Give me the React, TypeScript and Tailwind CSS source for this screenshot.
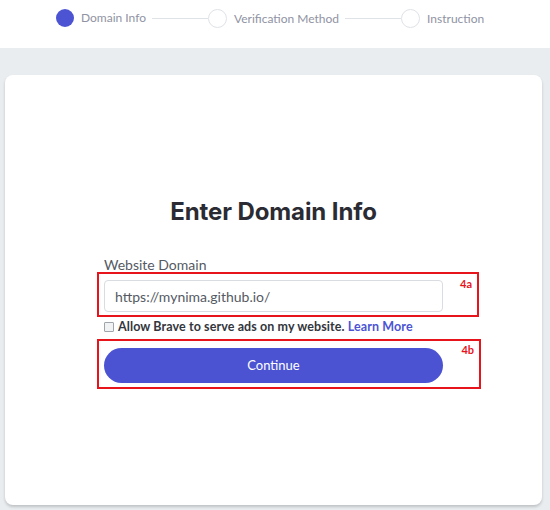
import React from "react";

function Step({ label, active, last }: { label: string; active?: boolean; last?: boolean }) {
  return (
    <div className="flex items-center">
      <span
        className={
          active
            ? "w-[18px] h-[18px] rounded-full bg-[#4c54d4]"
            : "w-[19px] h-[19px] rounded-full border border-[#dfe2e7] bg-white"
        }
      />
      <span className="ml-[7px] text-[12px] text-[#8f93a3]">{label}</span>
      {!last && <span className="ml-[6px] w-[56px] h-px bg-[#dfe2e7]" />}
    </div>
  );
}

export default function App() {
  return (
    <div className="w-[550px] h-[510px] bg-[#e9edf0] font-['Lato',sans-serif] overflow-hidden">
      <div className="h-[48px] bg-white flex items-start pt-[9px] pl-[56px]">
        <Step label="Domain Info" active />
        <Step label="Verification Method" />
        <Step label="Instruction" last />
      </div>

      <div className="mt-[27px] mx-[5px] w-[537px] h-[430px] bg-white rounded-lg shadow-[0_2px_3px_rgba(0,0,0,0.18)] flex flex-col items-center">
        <h1 className="mt-[121px] text-[24px] leading-8 font-bold text-[#2b2b33] font-['Inter',sans-serif] tracking-[-0.1px]">
          Enter Domain Info
        </h1>

        <div className="mt-[27px] w-[339px] flex flex-col">
          <label className="text-[14px] leading-5 text-[#555a63]">Website Domain</label>

          <div className="relative mt-[5px]">
            <input
              type="text"
              defaultValue="https://mynima.github.io/"
              className="w-full h-[32px] border border-[#d9dce1] rounded px-[10px] text-[14px] text-[#555a63] outline-none"
            />
            <div className="absolute left-[-7px] top-[-8px] w-[382px] h-[45px] border-2 border-[#e8141c]">
              <span className="absolute right-[5px] top-[4px] text-[11px] font-bold text-[#e8141c] leading-none">4a</span>
            </div>
          </div>

          <div className="mt-[6px] flex items-center">
            <span className="w-[10px] h-[10px] border border-[#a0a4ab] bg-[#f1f2f4] rounded-[1px]" />
            <span className="ml-[4px] text-[12.5px] tracking-[0.1px] font-bold text-[#33363d]">
              Allow Brave to serve ads on my website. <span className="text-[#4c54d4]">Learn More</span>
            </span>
          </div>

          <div className="relative mt-[11px]">
            <button className="w-full h-[35px] rounded-full bg-[#4b53d3] text-white text-[13px]">
              Continue
            </button>
            <div className="absolute left-[-7px] top-[-9px] w-[384px] h-[50px] border-2 border-[#e8141c]">
              <span className="absolute right-[5px] top-[3px] text-[11px] font-bold text-[#e8141c] leading-none">4b</span>
            </div>
          </div>
        </div>
      </div>
    </div>
  );
}
